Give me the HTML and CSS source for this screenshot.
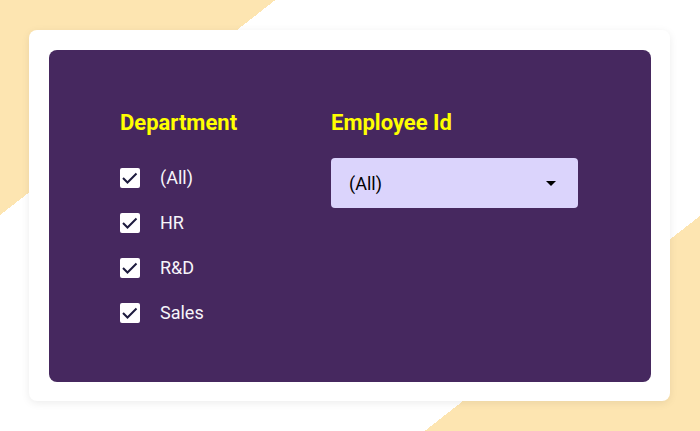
FILE: index.html
```html
<!DOCTYPE html>
<html>

<head>
    <title>Filters</title>
    <link rel="stylesheet" href="styles.css">
</head>

<body>

    <div class="card">
        <div class="panel">
            <div class="filter filter-dept">
                <h2>Department</h2>
                <ul class="checks">
                    <li>
                        <span class="box"><svg viewBox="0 0 20 20"><path d="M3 10 L7.5 14.5 L16.5 5.5" /></svg></span>
                        <span class="label">(All)</span>
                    </li>
                    <li>
                        <span class="box"><svg viewBox="0 0 20 20"><path d="M3 10 L7.5 14.5 L16.5 5.5" /></svg></span>
                        <span class="label">HR</span>
                    </li>
                    <li>
                        <span class="box"><svg viewBox="0 0 20 20"><path d="M3 10 L7.5 14.5 L16.5 5.5" /></svg></span>
                        <span class="label">R&amp;D</span>
                    </li>
                    <li>
                        <span class="box"><svg viewBox="0 0 20 20"><path d="M3 10 L7.5 14.5 L16.5 5.5" /></svg></span>
                        <span class="label">Sales</span>
                    </li>
                </ul>
            </div>

            <div class="filter filter-emp">
                <h2>Employee Id</h2>
                <div class="select">
                    <span>(All)</span>
                    <span class="caret"></span>
                </div>
            </div>
        </div>
    </div>

</body>

</html>
```

FILE: styles.css
```css
html,
body {
    height: 100%;
}

body {
    margin: 0;
    font-family: Roboto, 'Noto Sans', sans-serif;
    background: linear-gradient(142deg, #fde5b1 22%, #ffffff 22%, #ffffff 78%, #fde5b1 78%);
    overflow: hidden;
}

.card {
    box-sizing: border-box;
    width: 641px;
    margin: 30px 0 0 29px;
    padding: 20px 19px 19px 20px;
    background: #ffffff;
    border-radius: 8px;
    box-shadow: 0 2px 8px rgba(0, 0, 0, 0.08);
}

.panel {
    display: flex;
    height: 332px;
    box-sizing: border-box;
    padding: 60px 0 0 71px;
    background: #46285f;
    border-radius: 8px;
}

.filter h2 {
    margin: 0 0 22px;
    font-size: 22px;
    line-height: 26px;
    font-weight: 700;
    color: #ffff00;
}

.filter-dept {
    width: 211px;
}

.checks {
    list-style: none;
    margin: 0;
    padding: 10px 0 0;
    display: flex;
    flex-direction: column;
    gap: 25px;
}

.checks li {
    display: flex;
    align-items: center;
    height: 20px;
    gap: 20px;
}

.box {
    width: 20px;
    height: 20px;
    background: #ffffff;
    border-radius: 2px;
}

.box svg {
    display: block;
    width: 20px;
    height: 20px;
    fill: none;
    stroke: #1d1b3e;
    stroke-width: 2;
}

.label {
    font-size: 18px;
    line-height: 20px;
    color: #f7f5fa;
}

.select {
    display: flex;
    align-items: center;
    justify-content: space-between;
    box-sizing: border-box;
    width: 247px;
    height: 50px;
    padding: 0 22px 0 18px;
    background: #dbd4fc;
    border-radius: 4px;
    font-size: 18px;
    color: #000000;
}

.caret {
    width: 0;
    height: 0;
    border-left: 5px solid transparent;
    border-right: 5px solid transparent;
    border-top: 5px solid #000000;
}
```
